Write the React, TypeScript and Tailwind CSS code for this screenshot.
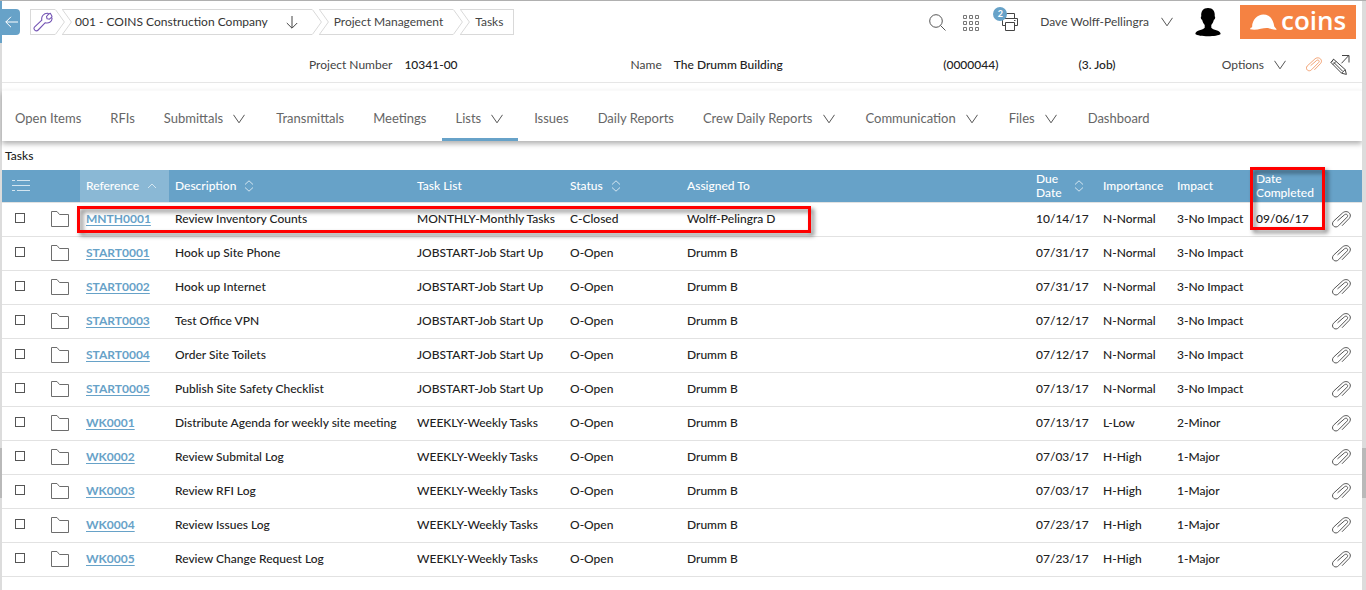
import type { ReactNode } from 'react';

type Task = {
  ref: string;
  description: string;
  list: string;
  status: string;
  assigned: string;
  due: string;
  importance: string;
  impact: string;
  completed?: string;
};

const tasks: Task[] = [
  { ref: 'MNTH0001', description: 'Review Inventory Counts', list: 'MONTHLY-Monthly Tasks', status: 'C-Closed', assigned: 'Wolff-Pelingra D', due: '10/14/17', importance: 'N-Normal', impact: '3-No Impact', completed: '09/06/17' },
  { ref: 'START0001', description: 'Hook up Site Phone', list: 'JOBSTART-Job Start Up', status: 'O-Open', assigned: 'Drumm B', due: '07/31/17', importance: 'N-Normal', impact: '3-No Impact' },
  { ref: 'START0002', description: 'Hook up Internet', list: 'JOBSTART-Job Start Up', status: 'O-Open', assigned: 'Drumm B', due: '07/31/17', importance: 'N-Normal', impact: '3-No Impact' },
  { ref: 'START0003', description: 'Test Office VPN', list: 'JOBSTART-Job Start Up', status: 'O-Open', assigned: 'Drumm B', due: '07/12/17', importance: 'N-Normal', impact: '3-No Impact' },
  { ref: 'START0004', description: 'Order Site Toilets', list: 'JOBSTART-Job Start Up', status: 'O-Open', assigned: 'Drumm B', due: '07/12/17', importance: 'N-Normal', impact: '3-No Impact' },
  { ref: 'START0005', description: 'Publish Site Safety Checklist', list: 'JOBSTART-Job Start Up', status: 'O-Open', assigned: 'Drumm B', due: '07/13/17', importance: 'N-Normal', impact: '3-No Impact' },
  { ref: 'WK0001', description: 'Distribute Agenda for weekly site meeting', list: 'WEEKLY-Weekly Tasks', status: 'O-Open', assigned: 'Drumm B', due: '07/13/17', importance: 'L-Low', impact: '2-Minor' },
  { ref: 'WK0002', description: 'Review Submital Log', list: 'WEEKLY-Weekly Tasks', status: 'O-Open', assigned: 'Drumm B', due: '07/03/17', importance: 'H-High', impact: '1-Major' },
  { ref: 'WK0003', description: 'Review RFI Log', list: 'WEEKLY-Weekly Tasks', status: 'O-Open', assigned: 'Drumm B', due: '07/03/17', importance: 'H-High', impact: '1-Major' },
  { ref: 'WK0004', description: 'Review Issues Log', list: 'WEEKLY-Weekly Tasks', status: 'O-Open', assigned: 'Drumm B', due: '07/23/17', importance: 'H-High', impact: '1-Major' },
  { ref: 'WK0005', description: 'Review Change Request Log', list: 'WEEKLY-Weekly Tasks', status: 'O-Open', assigned: 'Drumm B', due: '07/23/17', importance: 'H-High', impact: '1-Major' },
];

const navItems = [
  { label: 'Open Items' },
  { label: 'RFIs' },
  { label: 'Submittals', menu: true },
  { label: 'Transmittals' },
  { label: 'Meetings' },
  { label: 'Lists', menu: true, active: true },
  { label: 'Issues' },
  { label: 'Daily Reports' },
  { label: 'Crew Daily Reports', menu: true },
  { label: 'Communication', menu: true },
  { label: 'Files', menu: true },
  { label: 'Dashboard' },
];

function ChevronDown() {
  return (
    <svg width="12" height="10" viewBox="0 0 12 10" fill="none" stroke="#555" aria-hidden="true">
      <path d="M.5.8 6 8.800 11.500.8" />
    </svg>
  );
}

function SortIcon({ up = false }: { up?: boolean }) {
  return (
    <svg width="10" height="12" viewBox="0 0 10 12" fill="none" stroke="#d3e5f0" aria-hidden="true">
      {up ? <path d="M1 8 5 4l4 4" /> : <path d="M1 4.500 5 .8l4 3.700M1 7.500l4 3.700 4-3.700" />}
    </svg>
  );
}

function ClipIcon({ small = false }: { small?: boolean }) {
  return (
    <svg
      width={small ? 16 : 19}
      height={small ? 15 : 17}
      viewBox="0 0 19 17"
      fill="none"
      stroke="currentColor"
      strokeLinecap="round"
      aria-hidden="true"
    >
      <path d="M5.800 9.600 12.600 3.700c1.900-1.500 4.100.7 2.500 2.400L6.700 14.600c-3.200 3.600-8.400-.6-5.200-4.400L10.600 1.900c4.300-3.700 10.300 1.100 6.600 5.500L10.300 14.500" />
    </svg>
  );
}

function FolderIcon() {
  return (
    <svg width="18" height="16" viewBox="0 0 18 16" fill="none" stroke="#6d6d6d" aria-hidden="true">
      <path d="M.5 15.500V.5h5.500l2.500 3h9v12z" />
    </svg>
  );
}

function CrumbEdge() {
  return (
    <svg width="10" height="26" viewBox="0 0 10 26" fill="none" stroke="#d9d9d9" aria-hidden="true">
      <path d="M.4 .5 9.400 13 .4 25.500" />
    </svg>
  );
}

function Crumb({ children, first, last }: { children: ReactNode; first?: boolean; last?: boolean }) {
  return (
    <li className={first ? 'flex' : '-ml-[3px] flex'}>
      {first ? <span className="border-l border-[#d9d9d9]" /> : <CrumbEdge />}
      <div className={'flex h-[26px] items-center border-y border-[#d9d9d9] ' + (first ? '' : '-ml-2.5 pl-[13px] ') + (last ? 'border-r' : '')}>
        {children}
      </div>
      {!last && <CrumbEdge />}
    </li>
  );
}

function ScrollEdge({ className, marker }: { className: string; marker?: boolean }) {
  return (
    <div className={'flex shrink-0 flex-col bg-[#dcdcdc] ' + className} aria-hidden="true">
      {marker && <div className="h-[42px] bg-[#67a2c8]" />}
      <div className={marker ? 'grow-[406]' : 'grow-[448]'} />
      <div className="h-[50px] bg-[#b9b9b9]" />
      <div className="grow-[92]" />
    </div>
  );
}

function Heading({ children, sort, narrow }: { children: ReactNode; sort?: 'up' | 'both'; narrow?: boolean }) {
  return (
    <div className="flex items-center gap-2 leading-[14px]">
      <span className={narrow ? 'mr-1 w-min' : ''}>{children}</span>
      {sort && (
        <button type="button" aria-label="Sort">
          <SortIcon up={sort === 'up'} />
        </button>
      )}
    </div>
  );
}

export default function App() {
  return (
    <div className="flex min-h-screen border-t border-[#b0b0b0] bg-white font-[Lato,'Liberation_Sans',sans-serif] text-[13px] text-[#444]">
      <ScrollEdge className="w-0.5" marker />
      <main className="min-w-0 flex-1">
        <header className="text-[12px]">
          <div className="flex h-[42px] items-center">
            <button type="button" aria-label="Back" className="flex h-[26px] w-[18px] items-center justify-center rounded-r-sm bg-[#67a2c8]">
              <svg width="13" height="12" viewBox="0 0 13 12" fill="none" stroke="#fff" aria-hidden="true">
                <path d="M6 .8.8 6 6 11.200M.8 6H13" />
              </svg>
            </button>
            <nav aria-label="Breadcrumb" className="ml-2.5">
              <ol className="flex">
                <Crumb first>
                  <a href="#home" aria-label="Settings" className="flex w-6 justify-center">
                    <svg width="20" height="20" viewBox="0 0 20 20" fill="none" stroke="#7454b4" strokeWidth="1.100" strokeLinejoin="round" aria-hidden="true">
                      <path d="M1.700 14.800 8.800 8.200C8 4.500 10.800 1 14.600 1.200l1 1-2.100 2.300.6 2.300 2.300.4 2.100-1.900.6 1.400c-.3 3.100-3.500 4.900-6.800 4L5.200 18c-2.200 2.300-5.800-1.100-3.500-3.200z" />
                      <path d="m15.300 2.200 2-.9 1.700 2.900-.5 1.200" />
                    </svg>
                  </a>
                </Crumb>
                <Crumb>
                  <a href="#company" className="text-[#333]">001 - COINS Construction Company</a>
                  <button type="button" aria-label="Choose company" className="mr-3.5 ml-[18px]">
                    <svg width="12" height="13" viewBox="0 0 12 13" fill="none" stroke="#444" aria-hidden="true">
                      <path d="M6 0v12M.8 7 6 12.200 11.200 7" />
                    </svg>
                  </button>
                </Crumb>
                <Crumb>
                  <a href="#project" className="pr-2.5 pl-0.5">Project Management</a>
                </Crumb>
                <Crumb last>
                  <a href="#tasks" className="pr-2.5 pl-0.5">Tasks</a>
                </Crumb>
              </ol>
            </nav>
            <div className="ml-auto flex items-center">
              <button type="button" aria-label="Search">
                <svg width="17" height="17" viewBox="0 0 17 17" fill="none" stroke="#555" aria-hidden="true">
                  <circle cx="7" cy="7" r="6.300" />
                  <path d="m11.500 11.500 5 5" />
                </svg>
              </button>
              <button type="button" aria-label="Applications" className="ml-[17px]">
                <svg width="16" height="17" viewBox="0 0 16 17" fill="none" stroke="#777" aria-hidden="true">
                  <path d="M.5 1.500h3v3h-3zM6.500 1.500h3v3h-3zM12.500 1.500h3v3h-3zM.5 7.500h3v3h-3zM6.500 7.500h3v3h-3zM12.500 7.500h3v3h-3zM.5 13.500h3v3h-3zM6.500 13.500h3v3h-3zM12.500 13.500h3v3h-3z" />
                </svg>
              </button>
              <button type="button" aria-label="Print queue" className="relative ml-[22px]">
                <svg width="18" height="18" viewBox="0 0 18 18" fill="none" stroke="#444" aria-hidden="true">
                  <path d="M4.500 5.500v-5h9v5M4.500 12.500h-3v-7h15v7h-3M4.500 9.500h9v8h-9zM13 7.500h1.500" />
                </svg>
                <span className="absolute -top-1.5 -left-2 flex size-3.5 items-center justify-center rounded-full bg-[#67a2c8] text-[9px] font-bold text-white">2</span>
              </button>
              <button type="button" className="ml-[21px] flex items-center gap-3">
                Dave Wolff-Pellingra
                <ChevronDown />
              </button>
              <svg className="ml-[22px]" width="26" height="30" viewBox="0 0 26 30" fill="#000" role="img" aria-label="User photo">
                <path d="M13 1c4.800 0 7.300 3.500 6.700 8.200.9.600.6 3.200-.8 3.600-.6 2.700-1.700 4-2.600 5.200v2.800c1.700 2.400 8.700 2 9.400 6.200-3.200 3-22.200 3-25.400 0 .7-4.200 7.700-3.800 9.400-6.200V18c-.9-1.200-2-2.500-2.600-5.200-1.400-.4-1.700-3-.8-3.600C5.700 4.500 8.200 1 13 1z" />
              </svg>
              <a href="#coins" className="mr-1.5 ml-[19px] flex h-[34px] w-[116px] items-center bg-[#f58242] pl-2.5 text-white">
                <svg width="27" height="17" viewBox="0 0 27 17" fill="#fff" aria-hidden="true">
                  <path d="M0 15.300c.3-1.300 1.100-1.900 2.100-2C2 5.500 7.500.5 13.300.5c6.200 0 9.900 4.600 11 12l2.500 3.100c-4 .9-6.300-1.600-10.300-1.600-4.500 0-9.500 2.700-16.500 1.300z" />
                </svg>
                <span className="ml-1 h-[34px] font-['Open_Sans','Noto_Sans',sans-serif] text-[26px] leading-[31px] font-semibold">coins</span>
              </a>
            </div>
          </div>
          <div className="flex h-10 items-center border-b border-[#e6e6e6] pt-1">
            <dl className="grid flex-1 grid-cols-[321fr_312fr_135fr_143fr] pl-[307px] font-medium text-[#222]">
              <div className="flex gap-3">
                <dt className="font-normal text-[#444]">Project Number</dt>
                <dd>10341-00</dd>
              </div>
              <div className="flex gap-3">
                <dt className="font-normal text-[#444]">Name</dt>
                <dd>The Drumm Building</dd>
              </div>
              <dd>(0000044)</dd>
              <dd>(3. Job)</dd>
            </dl>
            <button type="button" className="flex items-center gap-2.5">
              Options
              <ChevronDown />
            </button>
            <button type="button" aria-label="Attachments" className="ml-5 text-[#f0915a]">
              <ClipIcon small />
            </button>
            <button type="button" aria-label="Edit" className="mr-3 ml-2">
              <svg width="20" height="20" viewBox="0 0 20 20" fill="none" stroke="#444" aria-hidden="true">
                <path d="M3.600 4.200 15.200 14.600l1.200 4.800-4.800-1.200L1 7.500zM1 7.500l2.600-3.300M3 9.600l3-3.200M11.600 18.200l3.600-3.600M3.800 7.400 12.800 16.400M11.500 8.300 18.500.8M12 .5h7v7" />
              </svg>
            </button>
          </div>
        </header>
        <nav aria-label="Project" className="mt-[7px] flex h-[51px] gap-[3px] border-t border-[#fafafa] text-[#666] shadow-[0_3px_5px_rgba(0,0,0,0.3)]">
          {navItems.map((item) => (
            <a
              key={item.label}
              href={'#' + item.label}
              className={
                'flex items-center border-b-3 px-[13px] pt-2 ' +
                (item.active ? 'border-[#67a2c8]' : 'border-transparent')
              }
            >
              {item.label}
              {item.menu && (
                <span className="mr-0.5 ml-2.5">
                  <ChevronDown />
                </span>
              )}
            </a>
          ))}
        </nav>
        <h1 className="flex h-[29px] items-center pl-[3px] text-[12px] font-medium text-[#222]">Tasks</h1>
        <table className="w-full table-fixed border-collapse text-left font-medium">
          <colgroup>
            <col className="w-[43px]" />
            <col className="w-[35px]" />
            <col className="w-[89px]" />
            <col className="w-[242px]" />
            <col className="w-[153px]" />
            <col className="w-[117px]" />
            <col />
            <col className="w-[67px]" />
            <col className="w-[74px]" />
            <col className="w-[79px]" />
            <col className="w-[76px]" />
            <col className="w-[36px]" />
          </colgroup>
          <thead className="text-[12px] text-white">
            <tr className="h-8 border-b border-[#e2e2e2] bg-[#67a2c8] *:p-0 *:pl-1.5 *:font-medium">
              <th colSpan={2}>
                <button type="button" aria-label="List options" className="ml-1 flex">
                  <svg width="18" height="12" viewBox="0 0 18 12" fill="none" stroke="#d3e5f0" aria-hidden="true">
                    <path d="M0 .5h3M5 .5h13M0 5.500h18M0 10.500h3M5 10.500h13" />
                  </svg>
                </button>
              </th>
              <th className="bg-[#8ab8d5]"><Heading sort="up">Reference</Heading></th>
              <th><Heading sort="both">Description</Heading></th>
              <th><Heading>Task List</Heading></th>
              <th><Heading sort="both">Status</Heading></th>
              <th><Heading>Assigned To</Heading></th>
              <th><Heading sort="both" narrow>Due Date</Heading></th>
              <th><Heading>Importance</Heading></th>
              <th><Heading>Impact</Heading></th>
              <th className="relative">
                <Heading>Date Completed</Heading>
                <div className="pointer-events-none absolute -top-[3px] left-0 h-[63px] w-[75px] border-3 border-[#f00] drop-shadow-[3px_3px_2px_rgba(0,0,0,0.5)]" />
              </th>
              <th aria-label="Attachments" />
            </tr>
          </thead>
          <tbody className="text-[12px] text-[#222]">
            {tasks.map((task, index) => (
              <tr key={task.ref} className="h-[34px] border-b border-[#e2e2e2] whitespace-nowrap *:p-0 *:pl-1.5">
                <td className="pb-0.5!">
                  <input
                    type="checkbox"
                    aria-label={'Select ' + task.ref}
                    className="ml-[7px] block size-2.5 appearance-none border border-[#555] bg-white checked:bg-[#67a2c8]"
                  />
                </td>
                <td>
                  <button type="button" aria-label={'Open ' + task.ref} className="block">
                    <FolderIcon />
                  </button>
                </td>
                <td className="relative">
                  <a href={'#' + task.ref} className="font-bold text-[#67a2c8] underline underline-offset-2">{task.ref}</a>
                  {index === 0 && (
                    <div className="pointer-events-none absolute top-[3px] -left-[3px] h-[27px] w-[734px] border-3 border-[#f00] drop-shadow-[3px_3px_2px_rgba(0,0,0,0.5)]" />
                  )}
                </td>
                <td>{task.description}</td>
                <td>{task.list}</td>
                <td>{task.status}</td>
                <td>{task.assigned}</td>
                <td>{task.due}</td>
                <td>{task.importance}</td>
                <td>{task.impact}</td>
                <td>{task.completed}</td>
                <td>
                  <button type="button" aria-label={'Attachments for ' + task.ref} className="block text-[#555]">
                    <ClipIcon />
                  </button>
                </td>
              </tr>
            ))}
          </tbody>
        </table>
      </main>
      <ScrollEdge className="w-1" />
    </div>
  );
}
